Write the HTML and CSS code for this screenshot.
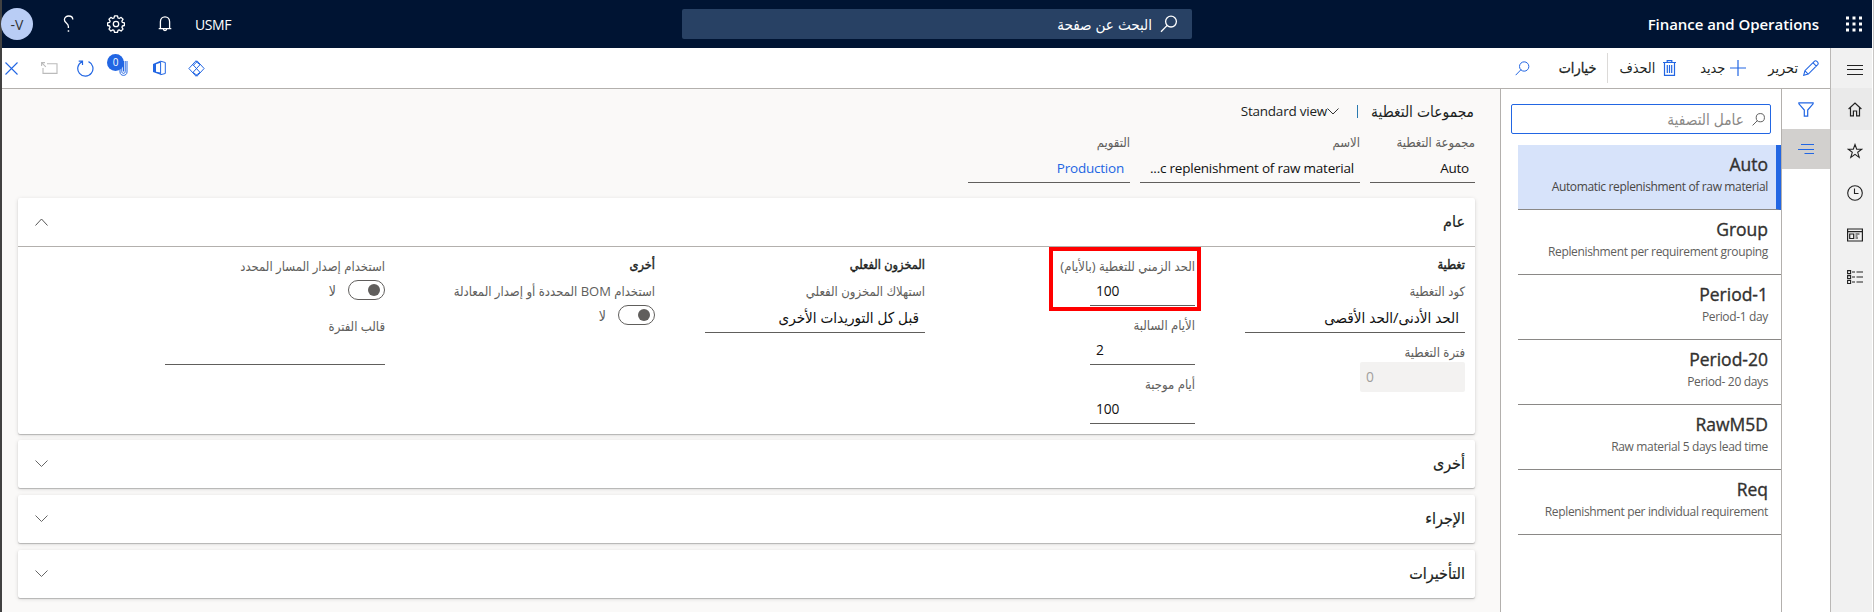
FILE: index.html
```html
<!DOCTYPE html>
<html lang="ar" dir="rtl">
<head>
<meta charset="utf-8">
<title>مجموعات التغطية</title>
<link rel="stylesheet" href="styles.css">
</head>
<body>
<div class="app">
  <header class="topbar">
    <div class="brand">
      <svg class="waffle" width="16" height="16" viewBox="0 0 16 16" fill="#fff"><path d="M0 .5h3v3H0zM6.500 .5h3v3h-3zM13 .5h3v3h-3zM0 6.500h3v3H0zM6.500 6.500h3v3h-3zM13 6.500h3v3h-3zM0 12.500h3v3H0zM6.500 12.500h3v3h-3zM13 12.500h3v3h-3z"/></svg>
      <span class="brand-name" dir="ltr">Finance and Operations</span>
    </div>
    <div class="page-search">
      <svg width="18" height="18" viewBox="0 0 18 18" fill="none" stroke="#fff" stroke-width="1.3"><circle cx="11" cy="6.600" r="5.400"/><path d="M7.200 10.400L1 16.800"/></svg>
      <span>البحث عن صفحة</span>
    </div>
    <div class="account" dir="ltr">
      <span class="avatar">-V</span>
      <svg class="help" width="11" height="18" viewBox="0 0 11 18" fill="none" stroke="#fff" stroke-width="1.3"><path d="M9.800 4.600C9.800 2.300 8 1 5.700 1S1.400 2.400 1.400 4.700C1.400 8 5.400 8 5.400 11.500V13"/><path d="M4.700 16h1.500" stroke-width="1.500"/></svg>
      <svg class="gear" width="18" height="18" viewBox="0 0 18 18" fill="none" stroke="#fff" stroke-width="1.300"><circle cx="9" cy="9" r="2.700"/><path stroke-linejoin="round" d="M7.500 .9h3l.5 2.100 1.200.5 1.900-1.100 1.900 1.900-1.100 1.900.5 1.200 2 .4v2.700l-2 .5-.5 1.200 1.100 1.900-1.900 1.900-1.900-1.100-1.200.5-.5 2H7.500l-.5-2-1.200-.5-1.900 1.100L2 14.100l1.100-1.900-.5-1.200-2-.5V7.800l2-.4.5-1.200L2 4.300l1.900-1.900 1.900 1.100L7 3z"/></svg>
      <svg class="bell" width="14" height="16" viewBox="0 0 14 16" fill="none" stroke="#fff" stroke-width="1.300"><path d="M.7 12.600h12.600M2.400 12.600V5.800C2.400 3 4.300.9 7 .9s4.600 2.100 4.600 4.900v6.800M5.300 13c.1 2 3.300 2 3.400 0"/></svg>
      <span class="company">USMF</span>
    </div>
  </header>

  <div class="body">
    <nav class="sidenav">
      <span class="nav-item nav-menu"><svg width="16" height="10" viewBox="0 0 16 10" stroke="#222" stroke-width="1"><path d="M0 .5h16M0 4.500h16M0 9.500h16"/></svg></span>
      <span class="nav-item nav-home"><svg width="14" height="15" viewBox="0 0 14 15" fill="none" stroke="#222" stroke-width="1.200"><path d="M.6 7L7 1l6.400 6M2.500 5.500v8.400h2.900V9h3.200v4.900h2.900V5.500"/></svg></span>
      <span class="nav-item"><svg width="16" height="16" viewBox="0 0 16 16" fill="none" stroke="#222" stroke-width="1.100"><path d="M8 1.500l1.700 4.700h5.100l-4.100 3.100 1.500 5.100L8 11.400l-4.200 3 1.500-5.100L1.200 6.200h5.100z"/></svg></span>
      <span class="nav-item"><svg width="16" height="16" viewBox="0 0 16 16" fill="none" stroke="#222" stroke-width="1.100"><circle cx="8" cy="8" r="7.300"/><path d="M7.500 3.500v5h4"/></svg></span>
      <span class="nav-item"><svg width="16" height="14" viewBox="0 0 16 14" fill="none" stroke="#222" stroke-width="1.200"><path d="M.6 1h14.800v12H.6zM.6 3.700h14.800M2.700 6h4v4.500h-4zM8.500 6h4M8.500 8h2M8.500 10h2.500"/></svg></span>
      <span class="nav-item"><svg width="16" height="14" viewBox="0 0 16 14" fill="none" stroke="#222" stroke-width="1.100"><path d="M.6.600h3v3h-3zM.6 5.600h3v3h-3zM.6 10.500h3v3h-3zM5 2h3M9.500 2H16M5 7h3M9.500 7H16M5 12h3M9.500 12H16"/></svg></span>
    </nav>

    <main class="main">
      <div class="toolbar">
        <div class="commands">
          <span class="cmd cmd-edit"><svg width="16" height="16" viewBox="0 0 16 16" fill="none" stroke="#2266e3" stroke-width="1.100"><path d="M.7 15.300l1.200-4.600L11.300 1.300c1.600-1.600 5 1.600 3.400 3.400L5.300 14.100zM9.900 2.700l3.400 3.400M2 10.900l3.200 3.200"/></svg><span>تحرير</span></span>
          <span class="cmd cmd-new"><svg width="16" height="16" viewBox="0 0 16 16" stroke="#2266e3" stroke-width="1.200"><path d="M0 8h16M8 0v16"/></svg><span>جديد</span></span>
          <span class="cmd cmd-delete"><svg width="13" height="16" viewBox="0 0 13 16" fill="none" stroke="#2266e3" stroke-width="1.200"><path d="M0 2.500h13M4.200 2.300V.7h4.600v1.600M1.500 2.500v12.800h10V2.500M4.300 5v8M6.500 5v8M8.700 5v8"/></svg><span>الحذف</span></span>
          <span class="cmd cmd-options">خيارات</span>
          <svg class="cmd-search" width="15" height="15" viewBox="0 0 18 18" fill="none" stroke="#2266e3" stroke-width="1.200"><circle cx="11" cy="6.600" r="5.600"/><path d="M7.200 10.400L.8 17"/></svg>
        </div>
        <div class="tools" dir="ltr">
          <svg width="13" height="13" viewBox="0 0 13 13" stroke="#2266e3" stroke-width="1.100"><path d="M.5.500l12 12M12.500.500l-12 12"/></svg>
          <svg class="tool-popout" width="17" height="12" viewBox="0 0 17 12" fill="none" stroke="#bbb" stroke-width="1.100"><path d="M6 1.800h10v9.600H2V6M.6 4V.6H4M.8.800l4 4"/></svg>
          <svg class="tool-refresh" width="17" height="17" viewBox="0 0 17 17" fill="none" stroke="#2266e3" stroke-width="1.200"><path d="M11.500 1.600A7.600 7.600 0 1 1 5 1.700M1.700 1.200h3.800v3.900"/></svg>
          <span class="attach">
            <svg width="9" height="16" viewBox="0 0 9 16" fill="none" stroke="#2266e3" stroke-width="1"><path d="M1 1v11c0 4.500 7 4.500 7 0V1M2.800 1v10.500c0 2.500 3.400 2.500 3.400 0V1M4.500 1v10.500"/></svg>
            <span class="badge">0</span>
          </span>
          <svg class="tool-office" width="13" height="16" viewBox="0 0 13 16" fill="#2266e3"><path fill-rule="evenodd" d="M0 4l7.500-3.300v2L3 4.200v7.500l4.500.9v2.200L0 12z"/><path d="M7.600 1.200l4.700 1.300v11l-4.700 1.200z" fill="#fff" stroke="#2266e3" stroke-width="1"/></svg>
          <svg class="tool-apps" width="17" height="17" viewBox="0 0 17 17" fill="none" stroke="#2266e3" stroke-width="1"><path d="M.9 8.500L7.600 1.200h1.800l6.700 7.300-6.700 7.300H7.600zM5 4.700l6.900 7.600M12 4.700l-6.900 7.600M9.400 1.200L5.200 5.600M7.600 1.200l4.400 3.500M9.400 15.800l-4.300-3.500M7.600 15.800l4.400-3.500"/></svg>
        </div>
      </div>

      <div class="workspace">
        <div class="pane-tabs">
          <span class="pane-tab"><svg width="16" height="15" viewBox="0 0 16 15" fill="none" stroke="#2266e3" stroke-width="1.200"><path d="M.9.800h14.200v1L9.700 8v6.200H6.300V8L.9 1.800z"/></svg></span>
          <span class="pane-tab is-active"><svg width="16" height="10" viewBox="0 0 16 10" stroke="#2266e3" stroke-width="1"><path d="M3 .5h13M0 5.500h16M6.500 9.500H16"/></svg></span>
        </div>

        <aside class="list-pane">
          <div class="filter">
            <svg width="13" height="13" viewBox="0 0 18 18" fill="none" stroke="#555" stroke-width="1.300"><circle cx="11.500" cy="6.500" r="5.700"/><path d="M7.500 10.500L.8 17.200"/></svg>
            <span>عامل التصفية</span>
          </div>
          <div class="list" dir="ltr">
            <div class="item is-selected"><b>Auto</b><span>Automatic replenishment of raw material</span></div>
            <div class="item"><b>Group</b><span>Replenishment per requirement grouping</span></div>
            <div class="item"><b>Period-1</b><span>Period-1 day</span></div>
            <div class="item"><b>Period-20</b><span>Period- 20 days</span></div>
            <div class="item"><b>RawM5D</b><span>Raw material 5 days lead time</span></div>
            <div class="item"><b>Req</b><span>Replenishment per individual requirement</span></div>
          </div>
        </aside>

        <section class="form">
          <div class="form-title">
            <span>مجموعات التغطية</span>
            <i class="bar"></i>
            <svg width="12" height="7" viewBox="0 0 12 7" fill="none" stroke="#333" stroke-width="1"><path d="M.5.500L6 6l5.500-5.500"/></svg>
            <span class="view latin" dir="ltr">Standard view</span>
          </div>
          <div class="form-head">
            <div class="field w-code"><label>مجموعة التغطية</label><div class="value latin">Auto</div></div>
            <div class="field w-name"><label>الاسم</label><div class="value latin" dir="ltr">...c replenishment of raw material</div></div>
            <div class="field w-cal"><label>التقويم</label><div class="value latin link">Production</div></div>
          </div>

          <div class="card card-open">
            <div class="card-head"><h2>عام</h2><svg width="13" height="8" viewBox="0 0 13 8" fill="none" stroke="#555" stroke-width="1"><path d="M.5 7.500l6-6.500 6 6.500"/></svg></div>
            <div class="card-body">
              <div class="col">
                <h3>تغطية</h3>
                <div class="field"><label>كود التغطية</label><div class="value">الحد الأدنى/الحد الأقصى</div></div>
                <div class="field"><label>فترة التغطية</label><div class="value num disabled">0</div></div>
              </div>
              <div class="col col-plain">
                <div class="field highlight"><label>الحد الزمني للتغطية (بالأيام)</label><div class="value num">100</div></div>
                <div class="field"><label>الأيام السالبة</label><div class="value num">2</div></div>
                <div class="field"><label>أيام موجبة</label><div class="value num">100</div></div>
              </div>
              <div class="col">
                <h3>المخزون الفعلي</h3>
                <div class="field"><label>استهلاك المخزون الفعلي</label><div class="value">قبل كل التوريدات الأخرى</div></div>
              </div>
              <div class="col">
                <h3>أخرى</h3>
                <div class="field"><label>استخدام BOM المحددة أو إصدار المعادلة</label><div class="switch-row"><i class="switch"></i><span>لا</span></div></div>
              </div>
              <div class="col col-plain">
                <div class="field"><label>استخدام إصدار المسار المحدد</label><div class="switch-row"><i class="switch"></i><span>لا</span></div></div>
                <div class="field field-template"><label>قالب الفترة</label><div class="value"></div></div>
              </div>
            </div>
          </div>
          <div class="card"><div class="card-head"><h2>أخرى</h2><svg width="13" height="8" viewBox="0 0 13 8" fill="none" stroke="#666" stroke-width="1"><path d="M.5.500l6 6 6-6"/></svg></div></div>
          <div class="card"><div class="card-head"><h2>الإجراء</h2><svg width="13" height="8" viewBox="0 0 13 8" fill="none" stroke="#666" stroke-width="1"><path d="M.5.500l6 6 6-6"/></svg></div></div>
          <div class="card"><div class="card-head"><h2>التأخيرات</h2><svg width="13" height="8" viewBox="0 0 13 8" fill="none" stroke="#666" stroke-width="1"><path d="M.5.500l6 6 6-6"/></svg></div></div>
        </section>
      </div>
    </main>
  </div>
</div>
</body>
</html>
```
FILE: styles.css
```css
* { box-sizing: border-box; }
html, body { margin: 0; height: 612px; overflow: hidden; }
body {
  font-family: "Open Sans", "DejaVu Sans Condensed", sans-serif;
  font-size: 14px;
  color: #201f1e;
  background: #fff;
  border-right: 1px solid #c8c6c4;
}
svg { display: block; flex: none; }
h2, h3 { margin: 0; font-weight: 400; }

.app {
  height: 612px;
  margin-right: 1px;
  display: flex;
  flex-direction: column;
  border-left: 2px solid #414141;
}

/* Top bar */
.topbar {
  height: 48px;
  flex: none;
  display: flex;
  align-items: center;
  background: #001433;
  color: #fff;
}
.brand { width: 680px; padding-right: 10px; display: flex; align-items: center; gap: 27px; }
.brand-name { font-weight: 600; font-size: 15px; letter-spacing: -.05px; line-height: 20px; padding-bottom: 1px; }
.page-search {
  width: 510px;
  height: 30px;
  padding-right: 14px;
  display: flex;
  align-items: center;
  gap: 8px;
  border-radius: 2px;
  background: #284164;
  font-size: 15.1px;
}
.account { flex: 1; display: flex; align-items: center; }
.avatar {
  width: 32px;
  height: 32px;
  margin-left: -1px;
  display: grid;
  place-items: center;
  border-radius: 50%;
  background: #b9cdf5;
  color: #333;
  font-size: 14px;
}
.help { margin-left: 30px; }
.gear { margin-left: 33px; }
.bell { margin-left: 33px; }
.company { margin-left: 23px; letter-spacing: -.4px; }

/* Body and side navigation */
.body { flex: 1; display: flex; min-height: 0; }
.sidenav {
  width: 42px;
  flex: none;
  border-left: 1px solid #bab8b6;
  background: #f1f1f1;
}
.nav-item { height: 42px; padding-left: 7px; display: grid; place-items: center; }
.nav-menu { height: 40px; padding-top: 4px; }
.nav-home { background: #eaeaea; }
.main { flex: 1; display: flex; flex-direction: column; min-width: 0; }

/* Action bar */
.toolbar {
  height: 41px;
  flex: none;
  display: flex;
  justify-content: space-between;
  align-items: center;
  border-bottom: 1px solid #b3b0ad;
  background: #fff;
}
.commands { display: flex; align-items: center; padding-right: 11px; }
.cmd { display: flex; align-items: center; gap: 5px; font-size: 14.3px; line-height: 20px; }
.cmd-new { margin-right: 22px; gap: 5px; }
.cmd-delete { margin-right: 24px; gap: 8px; }
.cmd-options {
  height: 30px;
  margin-right: 11px;
  padding-right: 11px;
  border-right: 1px solid #dcdad8;
  -webkit-text-stroke: .3px #201f1e;
}
.cmd-search { margin-right: 29px; }
.tools { display: flex; align-items: center; padding-left: 3px; }
.tool-popout { margin-left: 23px; }
.tool-refresh { margin-left: 19px; }
.attach { position: relative; margin-left: 25px; }
.badge {
  position: absolute;
  left: -12px;
  top: -6px;
  width: 17px;
  height: 17px;
  border-radius: 50%;
  background: #2266e3;
  color: #fff;
  font-size: 10px;
  line-height: 17px;
  text-align: center;
}
.tool-office { margin-left: 25px; }
.tool-apps { margin-left: 22px; }

/* Workspace */
.workspace { flex: 1; display: flex; min-height: 0; }
.pane-tabs { width: 49px; flex: none; border-left: 1px solid #b3b0ad; }
.pane-tab { height: 40px; display: grid; place-items: center; }
.pane-tab.is-active { background: #d2d0ce; }

.list-pane { width: 281px; flex: none; padding-top: 15px; border-left: 1px solid #b3b0ad; }
.filter {
  height: 30px;
  margin: 0 10px;
  padding-right: 5px;
  display: flex;
  align-items: center;
  gap: 8px;
  border: 1px solid #2266e3;
  border-radius: 2px;
  color: #8a8886;
  font-size: 15.3px;
}
.list { margin: 11px 0 0 17px; }
.item {
  height: 65px;
  padding: 7px 13px 0 0;
  display: flex;
  flex-direction: column;
  align-items: flex-end;
  border-bottom: 1px solid #8a8886;
}
.item b { font-weight: 400; font-size: 17.5px; line-height: 24px; color: #323130; -webkit-text-stroke: .35px #323130; }
.item span { font-size: 12px; line-height: 22px; letter-spacing: -.35px; color: #605e5c; }
.item.is-selected { padding-right: 8px; border-right: 5px solid #2266e3; background: #d7e3fa; }
.item.is-selected span { color: #484644; }

/* Form */
.form { flex: 1; min-width: 0; padding: 12px 26px 0 16px; background: #faf9f8; }
.form-title { height: 20px; display: flex; align-items: center; font-size: 15.4px; }
.bar { width: 1px; height: 13px; margin: 0 17px 0 17px; background: #2a7ab0; }
.form-title .bar { margin: 0 12px 0 17px; margin-inline: 13px 18px; }
.latin { font-size: 13.5px; letter-spacing: -.22px; }
.form-head { margin-top: 13px; display: flex; gap: 10px; }
.w-code { width: 105px; }
.w-name { width: 220px; }
.w-cal { width: 162px; }
.form > * { margin-right: -1px; }
.form > .form-title { margin-right: 0; }

.field label { display: block; height: 18px; line-height: 16px; font-size: 13px; white-space: nowrap; color: #605e5c; }
.value {
  height: 32px;
  padding: 3px 6px 0;
  border-bottom: 1px solid #605e5c;
  font-size: 15.1px;
  line-height: 27px;
  white-space: nowrap;
  color: #111;
}
.form-head .value { height: 31px; padding-top: 3px; line-height: 27px; font-size: 13.5px; text-align: right; }
.form-head .value.link { color: #2266e3; }
.value.num {
  width: 105px;
  height: 30px;
  padding-top: 1px;
  text-align: left;
  font-size: 13.8px;
  letter-spacing: -.2px;
}
.value.disabled { border: 0; border-radius: 2px; background: #f3f2f1; color: #a19f9d; }

.card {
  height: 48px;
  margin-bottom: 7px;
  border-radius: 2px;
  background: #fff;
  box-shadow: 0 1px 1px rgba(0, 0, 0, .22), 0 1px 4px rgba(0, 0, 0, .13);
}
.card-open { height: 236px; margin-top: 15px; margin-bottom: 6px; }
.card-head { height: 48px; padding: 0 10px 0 17px; display: flex; align-items: center; justify-content: space-between; }
.card-open .card-head { height: 49px; border-bottom: 1px solid #b3b0ad; }
.card-head h2 { padding-bottom: 2px; font-size: 16px; -webkit-text-stroke: .2px #201f1e; }

.card-body { padding: 0 10px; display: grid; grid-template-columns: repeat(5, 220px); gap: 50px; }
.col { padding-top: 9px; display: flex; flex-direction: column; gap: 11px; }
.col h3 { height: 16px; line-height: 16px; font-size: 12.7px; -webkit-text-stroke: .4px #201f1e; }
.col-plain { padding-top: 11px; }

/* Red call-out around the coverage time fence */
.highlight { position: relative; }
.highlight::after {
  content: "";
  position: absolute;
  inset: -11px -6px -5px 74px;
  border: 4px solid #f00;
}

.switch-row { margin-top: 4px; display: flex; align-items: flex-start; gap: 12px; color: #605e5c; font-size: 14px; line-height: 22px; }
.switch {
  width: 37px;
  height: 20px;
  padding: 3px 4px;
  border: 1px solid #605e5c;
  border-radius: 10px;
}
.switch::before { content: ""; display: block; width: 12px; height: 12px; border-radius: 50%; background: #605e5c; }
.field-template { margin-top: 5px; }
.field-template .value { height: 29px; }
```
